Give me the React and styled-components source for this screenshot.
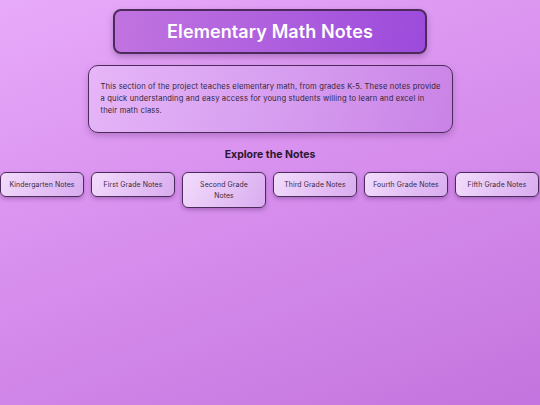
import React from "react";
import styled, { createGlobalStyle } from "styled-components";

const Global = createGlobalStyle`
  html, body { margin: 0; padding: 0; }
  body {
    min-height: 405px;
    font-family: "Inter", "Open Sans", sans-serif;
    background: linear-gradient(160deg, #e8aafa 0%, #d890ee 45%, #c474de 100%);
    background-attachment: fixed;
    color: #2e1e36;
  }
`;

const Page = styled.main`
  display: flex;
  flex-direction: column;
  align-items: center;
  padding-top: 9px;
  min-height: 405px;
  box-sizing: border-box;
`;

const TitleBox = styled.header`
  width: 314px;
  height: 45px;
  box-sizing: border-box;
  display: flex;
  align-items: center;
  justify-content: center;
  border: 2px solid #4c2b5c;
  border-radius: 8px;
  background: linear-gradient(100deg, #c174e0 0%, #ad5ede 55%, #9c4adb 100%);
  box-shadow: 0 3px 6px rgba(60, 20, 80, 0.3);
`;

const Title = styled.h1`
  margin: 0;
  font-size: 18px;
  font-weight: 600;
  color: #ffffff;
  letter-spacing: 0.1px;
`;

const DescBox = styled.section`
  margin-top: 11px;
  width: 365px;
  height: 68px;
  box-sizing: border-box;
  padding: 0 12px;
  display: flex;
  align-items: center;
  border: 1.5px solid #4c2b5c;
  border-radius: 10px;
  background: linear-gradient(110deg, #e6b6f8 0%, #d69cef 55%, #c982e6 100%);
  box-shadow: 0 3px 6px rgba(60, 20, 80, 0.25);
`;

const DescText = styled.p`
  margin: 0;
  font-size: 7.6px;
  letter-spacing: 0.15px;
  line-height: 12px;
  color: #33263a;
  white-space: nowrap;
`;

const Heading = styled.h2`
  margin: 15px 0 0;
  font-size: 10.5px;
  font-weight: 700;
  color: #2a1832;
  line-height: 14px;
`;

const Row = styled.nav`
  margin-top: 10px;
  width: 540px;
  display: flex;
  gap: 7px;
  align-items: flex-start;
`;

const NoteButton = styled.button`
  width: 84px;
  flex: 0 0 84px;
  box-sizing: border-box;
  padding: 6px 4px;
  border: 1.5px solid #4c2b5c;
  border-radius: 6px;
  background: linear-gradient(120deg, #f2dcfb 0%, #e6c4f6 50%, #d9acef 100%);
  box-shadow: 0 2px 4px rgba(60, 20, 80, 0.3);
  font-family: "Inter", "Open Sans", sans-serif;
  font-size: 6.9px;
  letter-spacing: 0.1px;
  line-height: 11px;
  color: #3a2a42;
  text-align: center;
  white-space: pre-line;
  cursor: pointer;
`;

const notes = [
  "Kindergarten Notes",
  "First Grade Notes",
  "Second Grade\nNotes",
  "Third Grade Notes",
  "Fourth Grade Notes",
  "Fifth Grade Notes",
];

export default function App() {
  return (
    <>
      <Global />
      <Page>
        <TitleBox>
          <Title>Elementary Math Notes</Title>
        </TitleBox>
        <DescBox>
          <DescText>
            This section of the project teaches elementary math, from grades K-5. These notes provide
            <br />
            a quick understanding and easy access for young students willing to learn and excel in
            <br />
            their math class.
          </DescText>
        </DescBox>
        <Heading>Explore the Notes</Heading>
        <Row>
          {notes.map((n) => (
            <NoteButton key={n}>{n}</NoteButton>
          ))}
        </Row>
      </Page>
    </>
  );
}
